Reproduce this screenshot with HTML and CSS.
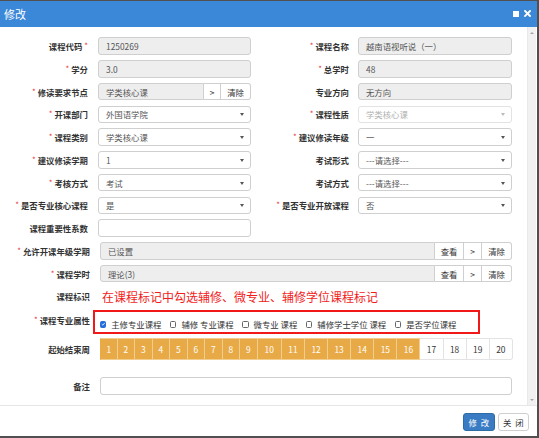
FILE: index.html
```html
<!DOCTYPE html>
<html lang="zh">
<head>
<meta charset="utf-8">
<title>修改</title>
<link rel="stylesheet" href="styles.css">
</head>
<body>
<div class="dialog">
  <div class="titlebar">
    <span class="title">修改</span>
    <span class="tools">
      <span class="icon-max"></span>
      <svg class="icon-close" width="7" height="7" viewBox="0 0 7 7"><path d="M1 1L6 6M6 1L1 6" stroke="#fff" stroke-width="1.9" stroke-linecap="square"/></svg>
    </span>
  </div>
  <div class="body">
    <div class="content">
      <div class="row">
        <div class="half-l"><label class="lbl">课程代码 <i>*</i></label><div class="ctl"><div class="field ro">1250269</div></div></div>
        <div class="half-r"><label class="lbl"><i>*</i> 课程名称</label><div class="ctl"><div class="field ro">越南语视听说（一）</div></div></div>
      </div>
      <div class="row">
        <div class="half-l"><label class="lbl"><i>*</i> 学分</label><div class="ctl"><div class="field ro">3.0</div></div></div>
        <div class="half-r"><label class="lbl"><i>*</i> 总学时</label><div class="ctl"><div class="field ro">48</div></div></div>
      </div>
      <div class="row">
        <div class="half-l"><label class="lbl"><i>*</i> 修读要求节点</label>
          <div class="ctl group"><div class="field ro grow">学类核心课</div><span class="gbtn w17">&gt;</span><span class="gbtn w30 last">清除</span></div></div>
        <div class="half-r"><label class="lbl">专业方向</label><div class="ctl"><div class="field ro">无方向</div></div></div>
      </div>
      <div class="row">
        <div class="half-l"><label class="lbl"><i>*</i> 开课部门</label><div class="ctl"><div class="field sel"><span>外国语学院</span><b class="caret"></b></div></div></div>
        <div class="half-r"><label class="lbl"><i>*</i> 课程性质</label><div class="ctl"><div class="field sel dis"><span>学类核心课</span><b class="caret"></b></div></div></div>
      </div>
      <div class="row">
        <div class="half-l"><label class="lbl"><i>*</i> 课程类别</label><div class="ctl"><div class="field sel"><span>学类核心课</span><b class="caret"></b></div></div></div>
        <div class="half-r"><label class="lbl"><i>*</i> 建议修读年级</label><div class="ctl"><div class="field sel"><span>一</span><b class="caret"></b></div></div></div>
      </div>
      <div class="row">
        <div class="half-l"><label class="lbl"><i>*</i> 建议修读学期</label><div class="ctl"><div class="field sel"><span>1</span><b class="caret"></b></div></div></div>
        <div class="half-r"><label class="lbl">考试形式</label><div class="ctl"><div class="field sel"><span>---请选择---</span><b class="caret"></b></div></div></div>
      </div>
      <div class="row">
        <div class="half-l"><label class="lbl"><i>*</i> 考核方式</label><div class="ctl"><div class="field sel"><span>考试</span><b class="caret"></b></div></div></div>
        <div class="half-r"><label class="lbl">考试方式</label><div class="ctl"><div class="field sel"><span>---请选择---</span><b class="caret"></b></div></div></div>
      </div>
      <div class="row">
        <div class="half-l"><label class="lbl"><i>*</i> 是否专业核心课程</label><div class="ctl"><div class="field sel"><span>是</span><b class="caret"></b></div></div></div>
        <div class="half-r"><label class="lbl"><i>*</i> 是否专业开放课程</label><div class="ctl"><div class="field sel"><span>否</span><b class="caret"></b></div></div></div>
      </div>
      <div class="row">
        <div class="half-l"><label class="lbl">课程重要性系数</label><div class="ctl"><div class="field"></div></div></div>
      </div>
      <div class="row full">
        <label class="lbl"><i>*</i> 允许开课年级学期</label>
        <div class="ctl group"><div class="field ro grow">已设置</div><span class="gbtn w29">查看</span><span class="gbtn w18">&gt;</span><span class="gbtn w30 last">清除</span></div>
      </div>
      <div class="row full">
        <label class="lbl"><i>*</i> 课程学时</label>
        <div class="ctl group"><div class="field ro grow">理论(3)</div><span class="gbtn w29">查看</span><span class="gbtn w18">&gt;</span><span class="gbtn w30 last">清除</span></div>
      </div>
      <div class="row full">
        <label class="lbl">课程标识</label>
        <div class="ctl note">在课程标记中勾选辅修、微专业、辅修学位课程标记</div>
      </div>
      <div class="row-box full">
        <label class="lbl top"><i>*</i> 课程专业属性</label>
        <div class="redbox">
          <span class="chk on"><svg width="6" height="6" viewBox="0 0 6 6"><path d="M1 3.2L2.4 4.5L5 1.6" fill="none" stroke="#fff" stroke-width="1.1"/></svg></span><span class="opt">主修专业课程</span>
          <span class="chk"></span><span class="opt">辅修 专业课程</span>
          <span class="chk"></span><span class="opt">微专业 课程</span>
          <span class="chk"></span><span class="opt">辅修学士学位 课程</span>
          <span class="chk"></span><span class="opt">是否学位课程</span>
        </div>
      </div>
      <div class="row-weeks full">
        <label class="lbl">起始结束周</label>
        <div class="weeks">
          <span class="wk on">1</span><span class="wk on">2</span><span class="wk on">3</span><span class="wk on">4</span><span class="wk on">5</span><span class="wk on">6</span><span class="wk on">7</span><span class="wk on">8</span><span class="wk on">9</span><span class="wk wk10 on">10</span><span class="wk wk2 on">11</span><span class="wk wk2 on">12</span><span class="wk wk2 on">13</span><span class="wk wk2 on">14</span><span class="wk wk2 on">15</span><span class="wk wk2 on">16</span><span class="wk wk2">17</span><span class="wk wk2">18</span><span class="wk wk2">19</span><span class="wk wk2">20</span>
        </div>
      </div>
      <div class="row full remark">
        <label class="lbl">备注</label>
        <div class="ctl"><div class="field"></div></div>
      </div>
    </div>
    <div class="scrollbar"><b class="arr up"></b><b class="arr down"></b></div>
  </div>
  <div class="footer">
    <span class="btn primary">修 改</span>
    <span class="btn">关 闭</span>
  </div>
</div>
</body>
</html>
```

FILE: styles.css
```css
* { box-sizing: border-box; }
html, body { margin: 0; padding: 0; }
body {
  width: 539px;
  height: 438px;
  overflow: hidden;
  background: #505050;
  font-family: "Noto Sans CJK SC", "Liberation Sans", sans-serif;
  font-size: 8.4px;
  color: #333;
}
.dialog {
  width: 537px;
  height: 435px;
  margin-top: 1px;
  background: #fff;
  display: flex;
  flex-direction: column;
}
.titlebar {
  height: 26px;
  flex: none;
  background: #3b87d8;
  color: #fff;
  display: flex;
  align-items: center;
  padding-left: 4px;
  font-size: 11px;
}
.title { flex: 1; }
.tools { display: flex; align-items: center; gap: 5px; margin-right: 6px; margin-top: -1px; }
.icon-max { width: 6px; height: 6px; background: #fff; display: block; }
.icon-close { display: block; }

.body { flex: 1; display: flex; min-height: 0; }
.content { flex: 1; padding-top: 10.3px; }
.scrollbar {
  width: 9px;
  margin-right: 1px;
  background: #f1f1f1;
  border-left: 1px solid #e9e9e9;
  display: flex;
  flex-direction: column;
  justify-content: space-between;
  align-items: center;
  padding: 5px 0 4px;
}
.arr { width: 0; height: 0; border-left: 2px solid transparent; border-right: 2px solid transparent; }
.arr.up { border-bottom: 2px solid #a5a5a5; }
.arr.down { border-top: 2px solid #a5a5a5; }

.row { display: flex; align-items: center; height: 17.5px; margin-bottom: 5.27px; }
.half-l { display: flex; align-items: center; height: 100%; }
.half-l .lbl { width: 88px; }
.half-l .ctl { width: 153px; margin-left: 10px; }
.half-r { display: flex; align-items: center; height: 100%; }
.half-r .lbl { width: 98px; }
.half-r .ctl { width: 154px; margin-left: 9px; }
.full .lbl { width: 90px; flex: none; }
.full .ctl { width: 412px; margin-left: 10px; }

.lbl { text-align: right; font-weight: bold; color: #333; white-space: nowrap; line-height: 12px; }
.lbl i { font-style: normal; color: #e8383d; font-weight: normal; font-size: 8px; vertical-align: 1px; }
.lbl.top { margin-top: 4px; }

.ctl { height: 100%; display: flex; }
.field {
  flex: 1;
  height: 100%;
  border: 1px solid #cfcfcf;
  border-radius: 3px;
  background: #fff;
  color: #555;
  padding: 0 7px;
  display: flex;
  align-items: center;
  white-space: nowrap;
}
.field.ro { background: #eee; }
.field.sel { justify-content: space-between; padding-right: 6px; }
.field.dis { border-color: #e3e3e3; color: #b0b0b0; }
.caret { width: 0; height: 0; border-left: 2px solid transparent; border-right: 2px solid transparent; border-top: 3px solid #555; margin-top: 1px; }
.field.dis .caret { border-top-color: #bbb; }

.group .field { border-radius: 3px 0 0 3px; }
.gbtn {
  flex: none;
  height: 100%;
  border: 1px solid #cfcfcf;
  border-left: none;
  background: #fff;
  color: #333;
  display: flex;
  align-items: center;
  justify-content: center;
}
.gbtn.last { border-radius: 0 3px 3px 0; }
.w17 { width: 17px; }
.w18 { width: 18px; }
.w29 { width: 29px; }
.w30 { width: 30px; }

.note { color: #f21c1c; font-size: 12px; align-items: center; padding-left: 2px; white-space: nowrap; }

.row-box { display: flex; align-items: flex-start; margin-top: 0.6px; }
.redbox {
  margin-left: 3px;
  width: 387px;
  height: 24px;
  border: 2px solid #f01818;
  display: flex;
  align-items: center;
  padding-left: 4.7px;
  padding-top: 4px;
}
.chk {
  width: 6.5px;
  height: 6.5px;
  border: 1px solid #666;
  border-radius: 1.5px;
  background: #fff;
  display: flex;
  align-items: center;
  justify-content: center;
  flex: none;
}
.chk svg { display: block; }
.chk.on { background: #2470d8; border-color: #2470d8; }
.opt { margin-left: 5px; margin-right: 8.5px; color: #333; white-space: nowrap; }

.row-weeks { display: flex; align-items: center; height: 22px; margin-top: 4px; }
.weeks { display: flex; margin-left: 10px; height: 100%; }
.wk {
  width: 17.5px;
  height: 100%;
  display: flex;
  align-items: center;
  justify-content: center;
  border: 1px solid #e3e3e3;
  border-left: none;
  color: #333;
}
.wk:first-child { border-left: 1px solid #e3e3e3; }
.wk2 { width: 23.1px; }
.wk10 { width: 24.4px; }
.wk.on { background: #e8aa47; color: #fff; border-color: #f1cd8e; }
.wk.on:first-child { border-left-color: #e8aa47; }
.wk:last-child { border-radius: 0 3px 3px 0; }

.remark { margin-top: 17px; }

.footer {
  height: 31px;
  flex: none;
  border-top: 1px solid #e6e6e6;
  display: flex;
  justify-content: flex-end;
  align-items: flex-start;
  padding: 7px 8px 0 0;
  gap: 3px;
}
.btn {
  width: 31.5px;
  height: 17.5px;
  border: 1px solid #cfcfcf;
  border-radius: 3px;
  background: #fff;
  color: #333;
  display: flex;
  align-items: center;
  justify-content: center;
  white-space: pre;
  word-spacing: 2px;
}
.btn.primary { background: #3a7cc4; border-color: #2e6da4; color: #fff; }
```
